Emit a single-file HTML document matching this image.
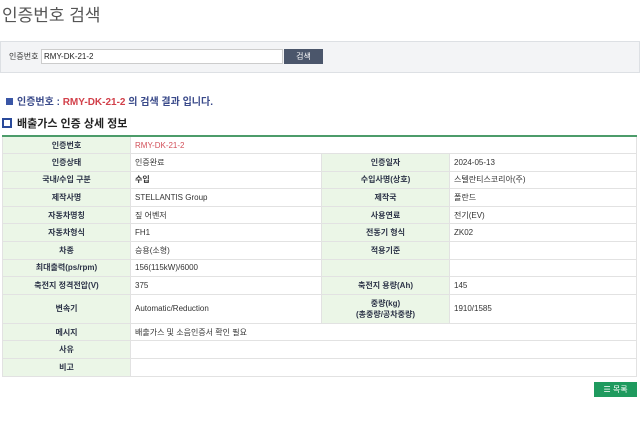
<html><head><style>
body{margin:0;width:640px;height:426px;background:#fff;font-family:"Liberation Sans","Noto Sans CJK KR",sans-serif;position:relative;overflow:hidden}
.t{position:absolute;left:2px;top:1px;font-size:17px;color:#555}
.sb{position:absolute;left:0;top:41px;width:638px;height:30px;background:#f3f4f6;border:1px solid #dde0e4}
.sb .l{position:absolute;left:8px;top:9px;font-size:8px;color:#333}
.sb .i{position:absolute;left:40px;top:7px;width:238px;height:13px;border:1px solid #ccc;background:#fff;font-size:8px;line-height:13px;padding-left:2px;color:#222}
.sb .b{position:absolute;left:283px;top:7px;width:39px;height:15px;background:#4b566b;color:#fff;font-size:8px;text-align:center;line-height:15px}
.r{position:absolute;left:6px;top:93px;font-size:10px;font-weight:bold;color:#3a4a8a}
.r i{display:inline-block;width:7px;height:7px;background:#3a56a6;margin-right:4px;vertical-align:0}
.r span{color:#d2404a}
.s{position:absolute;left:2px;top:115px;font-size:11px;font-weight:bold;color:#222}
.s i{display:inline-block;width:6px;height:6px;border:2px solid #2a4a9a;margin-right:5px;vertical-align:-1px}
table{position:absolute;left:2px;top:135px;width:635px;border-collapse:collapse;border-top:2px solid #4c9c6a;font-size:8px;color:#333}
td{border:1px solid #e2e2e2;height:17.6px;padding:0 4px}
td.h{background:#ebf6e7;text-align:center;font-weight:bold;color:#2d3448;width:119px}
td.v{width:182px}
.btn{position:absolute;left:594px;top:382px;width:43px;height:15px;background:#1f9a5e;color:#fff;font-size:8px;text-align:center;line-height:15px}
</style></head><body>
<div class="t">인증번호 검색</div>
<div class="sb"><div class="l">인증번호</div><div class="i">RMY-DK-21-2</div><div class="b">검색</div></div>
<div class="r"><i></i>인증번호 : <span>RMY-DK-21-2</span> 의 검색 결과 입니다.</div>
<div class="s"><i></i>배출가스 인증 상세 정보</div>
<table>
<tr><td class="h">인증번호</td><td colspan="3" style="color:#d2505a">RMY-DK-21-2</td></tr>
<tr><td class="h">인증상태</td><td class="v">인증완료</td><td class="h">인증일자</td><td>2024-05-13</td></tr>
<tr><td class="h">국내/수입 구분</td><td class="v"><b>수입</b></td><td class="h">수입사명(상호)</td><td>스텔란티스코리아(주)</td></tr>
<tr><td class="h">제작사명</td><td class="v">STELLANTIS Group</td><td class="h">제작국</td><td>폴란드</td></tr>
<tr><td class="h">자동차명칭</td><td class="v">짚 어벤저</td><td class="h">사용연료</td><td>전기(EV)</td></tr>
<tr><td class="h">자동차형식</td><td class="v">FH1</td><td class="h">전동기 형식</td><td>ZK02</td></tr>
<tr><td class="h">차종</td><td class="v">승용(소형)</td><td class="h">적용기준</td><td></td></tr>
<tr><td class="h">최대출력(ps/rpm)</td><td class="v">156(115kW)/6000</td><td class="h"></td><td></td></tr>
<tr><td class="h">축전지 정격전압(V)</td><td class="v">375</td><td class="h">축전지 용량(Ah)</td><td>145</td></tr>
<tr><td class="h" style="height:29px">변속기</td><td class="v">Automatic/Reduction</td><td class="h">중량(kg)<br>(총중량/공차중량)</td><td>1910/1585</td></tr>
<tr><td class="h">메시지</td><td colspan="3">배출가스 및 소음인증서 확인 필요</td></tr>
<tr><td class="h">사유</td><td colspan="3"></td></tr>
<tr><td class="h">비고</td><td colspan="3"></td></tr>
</table>
<div class="btn">☰ 목록</div>
</body></html>
